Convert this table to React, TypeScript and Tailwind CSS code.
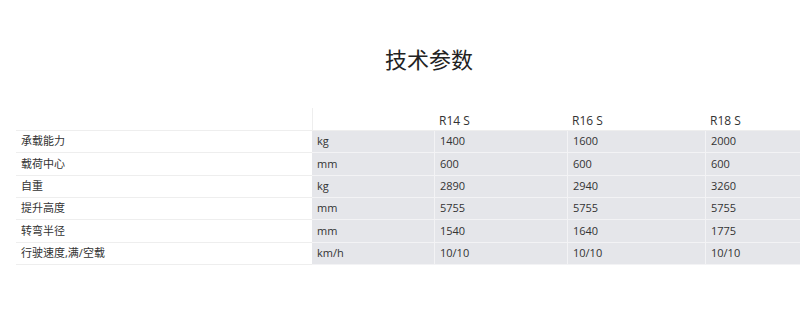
import React from "react";

const models = ["R14 S", "R16 S", "R18 S"];

const rows: { label: string; unit: string; values: string[] }[] = [
  { label: "承载能力", unit: "kg", values: ["1400", "1600", "2000"] },
  { label: "载荷中心", unit: "mm", values: ["600", "600", "600"] },
  { label: "自重", unit: "kg", values: ["2890", "2940", "3260"] },
  { label: "提升高度", unit: "mm", values: ["5755", "5755", "5755"] },
  { label: "转弯半径", unit: "mm", values: ["1540", "1640", "1775"] },
  { label: "行驶速度,满/空载", unit: "km/h", values: ["10/10", "10/10", "10/10"] },
];

const cols = "grid grid-cols-[296px_122px_133px_138px_137px]";

const App: React.FC = () => {
  return (
    <div
      className="w-full h-[320px] overflow-hidden bg-white text-[#333]"
      style={{ fontFamily: '"Open Sans", "Noto Sans CJK SC", sans-serif' }}
    >
      <div className="w-[826px] ml-4 pt-[44px]">
        <h1 className="text-center text-[22px] leading-[30px] font-normal text-[#222]">
          技术参数
        </h1>

        <div className="mt-[34px] text-[11px]">
          {/* header row */}
          <div className={`${cols} h-[23px] border-b border-[#eeeeee]`}>
            <div />
            <div className="border-l border-[#eeeeee]" />
            {models.map((m) => (
              <div key={m} className="flex items-end pl-[5px] text-[12px]">
                {m}
              </div>
            ))}
          </div>

          {rows.map((r) => (
            <div key={r.label} className={`${cols} h-[22.33px]`}>
              <div className="flex items-center pl-[5px] border-b border-[#eeeeee] bg-white">
                {r.label}
              </div>
              <div className="flex items-center pl-[5px] bg-[#e5e6ea] border-b border-[#f3f3f5]">
                {r.unit}
              </div>
              {r.values.map((v, i) => (
                <div
                  key={i}
                  className="flex items-center pl-[5px] bg-[#e5e6ea] border-b border-l border-[#f3f3f5]"
                >
                  {v}
                </div>
              ))}
            </div>
          ))}
        </div>
      </div>
    </div>
  );
};

export default App;
